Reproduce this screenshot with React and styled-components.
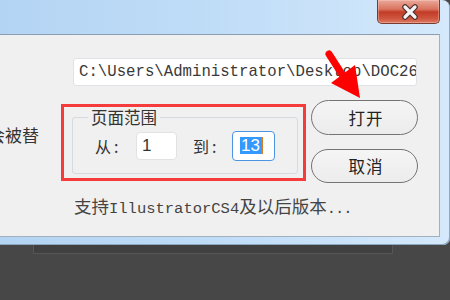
import React from 'react';
import styled, { createGlobalStyle } from 'styled-components';

const GlobalStyle = createGlobalStyle`
  html, body {
    margin: 0;
    padding: 0;
  }
  body {
    background: #474747;
    font-family: "Noto Sans CJK SC", "Noto Sans", sans-serif;
  }
`;

const Screen = styled.div`
  position: relative;
  width: 450px;
  height: 300px;
  overflow: hidden;
  background: #474747;
`;

const Window = styled.div`
  width: 450px;
  height: 245px;
  box-sizing: border-box;
  display: flex;
  flex-direction: column;
  background: linear-gradient(90deg, #b3d4f3 0%, #c2def8 55%, #d5e9fb 100%);
  border-radius: 0 8px 7px 0;
  box-shadow: inset -1px -1px 0 #8ea7c0;
`;

const TitleBar = styled.div`
  height: 34px;
  flex: none;
  display: flex;
  justify-content: flex-end;
  padding-right: 10px;
`;

const CloseButton = styled.div`
  width: 63px;
  height: 24px;
  box-sizing: border-box;
  display: flex;
  align-items: center;
  justify-content: center;
  padding-left: 2px;
  border: 1px solid #7a3b30;
  border-top: none;
  border-radius: 0 0 5px 5px;
  background: linear-gradient(180deg, #eaa99b 0%, #d9735e 40%, #c23c27 52%, #cf553f 80%, #dc7a63 100%);
  box-shadow: inset 0 0 0 1px rgba(255, 220, 210, 0.35);
`;

const Panel = styled.div`
  width: 440px;
  height: 203px;
  box-sizing: border-box;
  display: flex;
  flex-direction: column;
  background: #f0f0f0;
  border-top: 1px solid #8b9db2;
  border-right: 1px solid #a3b0bd;
  border-bottom: 1px solid #a3b0bd;
`;

const PathField = styled.div`
  margin: 23px 0 0 73px;
  width: 344px;
  height: 28px;
  box-sizing: border-box;
  padding-left: 5px;
  display: flex;
  align-items: center;
  overflow: hidden;
  white-space: nowrap;
  background: #fff;
  border: 1px solid #dfe3e7;
  border-radius: 3px;
  font-family: "Liberation Mono", monospace;
  font-size: 15.7px;
  color: #3a3a3a;
`;

const MiddleRow = styled.div`
  margin-top: 14px;
  display: flex;
  align-items: flex-start;
`;

const LeftNote = styled.div`
  width: 61px;
  flex: none;
  padding-top: 25px;
  font-size: 17px;
  line-height: 20px;
  color: #333;
  white-space: nowrap;

  span {
    display: inline-block;
    margin-left: -12px;
  }
`;

const Highlight = styled.div`
  margin-top: 4px;
  width: 245px;
  height: 77px;
  box-sizing: border-box;
  flex: none;
  border: 3px solid #f53b3b;
`;

const Group = styled.div`
  position: relative;
  margin: 10px 0 0 8px;
  width: 226px;
  height: 57px;
  box-sizing: border-box;
  display: flex;
  align-items: center;
  padding-left: 22px;
  border: 1px solid #d3dbe1;
  border-radius: 3px;
`;

const Legend = styled.span`
  position: absolute;
  top: -11px;
  left: 15px;
  padding: 0 3px;
  background: #f0f0f0;
  font-size: 16.5px;
  line-height: 20px;
  color: #333;
`;

const Label = styled.span`
  width: ${p => p.$w}px;
  flex: none;
  font-size: 16px;
  line-height: 20px;
  color: #333;
  letter-spacing: 3px;
`;

const NumberField = styled.div`
  width: ${p => p.$w}px;
  height: ${p => p.$h}px;
  box-sizing: border-box;
  flex: none;
  display: flex;
  align-items: center;
  padding-left: ${p => (p.$active ? 7 : 5)}px;
  margin-right: ${p => p.$gap || 0}px;
  background: #fff;
  border: ${p => (p.$active ? '1.5px solid #4c95e2' : '1px solid #e2e2e2')};
  border-radius: 4px;
  font-family: "Liberation Sans", sans-serif;
  font-size: 17px;
  color: #333;
`;

const Selected = styled.span`
  background: #3399ff;
  color: #fff;
  line-height: 17px;
  padding: 0 1px;
`;

const Caret = styled.span`
  width: 2px;
  height: 17px;
  background: #e07a1f;
`;

const Buttons = styled.div`
  margin-left: 5px;
  display: flex;
  flex-direction: column;
  gap: 14px;
`;

const PillButton = styled.div`
  width: 107px;
  height: ${p => p.$h}px;
  box-sizing: border-box;
  display: flex;
  align-items: center;
  justify-content: center;
  padding-left: 3px;
  border: 1px solid #747474;
  border-radius: 18px;
  background: linear-gradient(180deg, #f5f5f5 0%, #ececec 100%);
  font-size: 16.5px;
  color: #222;
  letter-spacing: 1px;
`;

const Support = styled.div`
  margin: 13px 0 0 74px;
  font-size: 17.5px;
  line-height: 20px;
  color: #444;
  white-space: nowrap;

  span {
    font-family: "Liberation Mono", monospace;
    font-size: 15.5px;
  }
`;

const Dots = styled.span`
  letter-spacing: -1px;
`;

const Shadow = styled.div`
  margin-left: 33px;
  width: 360px;
  height: 9px;
  box-sizing: border-box;
  background: #404040;
  border: 1px solid #555;
  border-top: none;
`;

const ArrowLayer = styled.svg`
  position: absolute;
  top: 0;
  left: 0;
  pointer-events: none;
`;

export default function App() {
  return (
    <Screen>
      <GlobalStyle />
      <Window>
        <TitleBar>
          <CloseButton>
            <svg width="18" height="16" viewBox="0 0 18 16">
              <path d="M4 3 L14 13 M14 3 L4 13" stroke="#4b2f2c" strokeWidth="5.5" strokeLinecap="round" />
              <path d="M4 3 L14 13 M14 3 L4 13" stroke="#f4f4f4" strokeWidth="3.2" strokeLinecap="round" />
            </svg>
          </CloseButton>
        </TitleBar>
        <Panel>
          <PathField>C:\Users\Administrator\Desktop\DOC2624.ai</PathField>
          <MiddleRow>
            <LeftNote><span>会被替</span></LeftNote>
            <Highlight>
              <Group>
                <Legend>页面范围</Legend>
                <Label $w={41}>从:</Label>
                <NumberField $w={41} $h={28} $gap={16}>1</NumberField>
                <Label $w={39}>到:</Label>
                <NumberField $w={43} $h={30} $active>
                  <Selected>13</Selected>
                  <Caret />
                </NumberField>
              </Group>
            </Highlight>
            <Buttons>
              <PillButton $h={35}>打开</PillButton>
              <PillButton $h={34}>取消</PillButton>
            </Buttons>
          </MiddleRow>
          <Support>支持<span>IllustratorCS4</span>及以后版本<Dots as="span">...</Dots></Support>
        </Panel>
      </Window>
      <Shadow />
      <ArrowLayer width="450" height="300" viewBox="0 0 450 300">
        <path d="M329 54 L345 79" stroke="#ff0000" strokeWidth="7" strokeLinecap="round" />
        <polygon points="331,83 355,65 360,98" fill="#ff0000" />
      </ArrowLayer>
    </Screen>
  );
}
